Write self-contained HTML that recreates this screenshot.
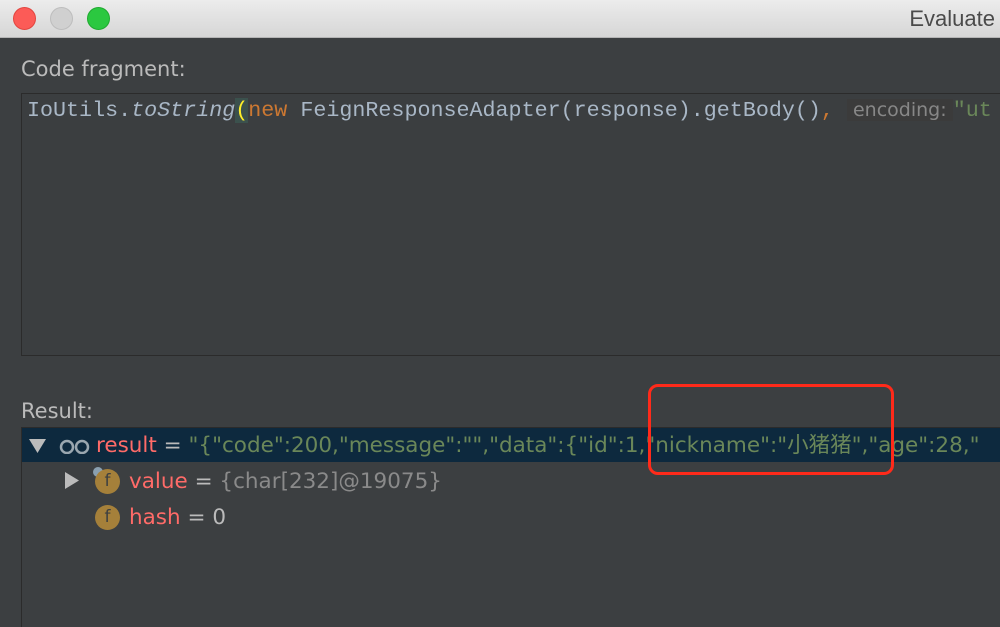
<!DOCTYPE html>
<html><head><meta charset="utf-8"><style>
*{margin:0;padding:0;box-sizing:border-box}
body{width:1000px;height:612px;overflow:hidden;background:#3c3f41;position:relative;font-family:"DejaVu Sans","Noto Sans CJK SC",sans-serif}
.tb{position:absolute;left:0;top:0;width:1000px;height:38px;background:linear-gradient(#ececec,#d6d6d6);border-bottom:1px solid #b5b5b5}
.dot{position:absolute;top:7px;width:23px;height:23px;border-radius:50%}
.ttl{position:absolute;right:5px;top:6px;font-size:22px;color:#4a4a4a;font-family:"Liberation Sans",sans-serif}
.lbl{position:absolute;left:21px;font-size:21px;color:#bbbbbb}
.ed{position:absolute;left:21px;top:93px;width:990px;height:263px;border:1px solid #2b2b2b;background:#3b3e40}
.code{position:absolute;left:27px;top:96px;font-family:"Liberation Mono",monospace;font-size:21.7px;color:#a9b7c6;white-space:pre;line-height:28px}
.tree{position:absolute;left:21px;top:427px;width:990px;height:200px;border-left:1px solid #2b2b2b;border-top:1px solid #2b2b2b}
.t{position:absolute;font-size:21.5px;white-space:pre;color:#bbbbbb;line-height:30px}
.sel{position:absolute;left:22px;top:428px;width:978px;height:34px;background:#0d293e}
.fi{position:absolute;width:25px;height:25px;border-radius:50%;background:#a5803a;color:#3c3f41;font-size:17px;text-align:center;line-height:25px}
.k{color:#ff6b68}.s{color:#6a8759}
</style></head><body>
<div class="tb">
<div class="dot" style="left:13px;background:#fc5b57;border:1px solid #e2453f"></div>
<div class="dot" style="left:50px;background:#d0d0d0;border:1px solid #bdbdbd"></div>
<div class="dot" style="left:87px;background:#2bc840;border:1px solid #1faa2f"></div>
<div class="ttl">Evaluate</div>
</div>
<div class="lbl" style="top:57px">Code fragment:</div>
<div class="ed"></div>
<div class="code">IoUtils.<i>toString</i><span style="color:#ffef28;background:#3b514d">(</span><span style="color:#cc7832">new</span> FeignResponseAdapter(response).getBody()<span style="color:#cc7832">,</span> <span style="color:#878787;background:#3b3b3b;font-family:'DejaVu Sans',sans-serif;font-size:19px"> encoding: </span><span class="s">"ut</span></div>
<div class="lbl" style="top:399px">Result:</div>
<div class="tree"></div>
<div class="sel"></div>
<svg style="position:absolute;left:29px;top:438px" width="18" height="16"><path d="M0 1H17L8.5 15Z" fill="#bbbbbb"/></svg>
<svg style="position:absolute;left:59px;top:438px" width="32" height="16"><circle cx="8" cy="9" r="6" fill="none" stroke="#9aa7b0" stroke-width="2.5"/><circle cx="23" cy="9" r="6" fill="none" stroke="#9aa7b0" stroke-width="2.5"/></svg>
<div class="t" style="left:96px;top:431px"><span class="k">result</span> = <span class="s">"{"code":200,"message":"","data":{"id":1,"nickname":"小猪猪","age":28,"</span></div>
<svg style="position:absolute;left:64px;top:472px" width="16" height="18"><path d="M1 0V17L15 8.5Z" fill="#bbbbbb"/></svg>
<div style="position:absolute;left:93px;top:467px;width:10px;height:10px;border-radius:50%;background:#8aa0b0"></div>
<div class="fi" style="left:95px;top:469px">f</div>
<div class="t" style="left:129px;top:467px"><span class="k">value</span> = <span style="color:#8a8a8a">{char[232]@19075}</span></div>
<div class="fi" style="left:95px;top:505px">f</div>
<div class="t" style="left:129px;top:503px"><span class="k">hash</span> = 0</div>
<div style="position:absolute;left:648px;top:384px;width:246px;height:91px;border:3px solid #ff2a1a;border-radius:10px"></div>
</body></html>
